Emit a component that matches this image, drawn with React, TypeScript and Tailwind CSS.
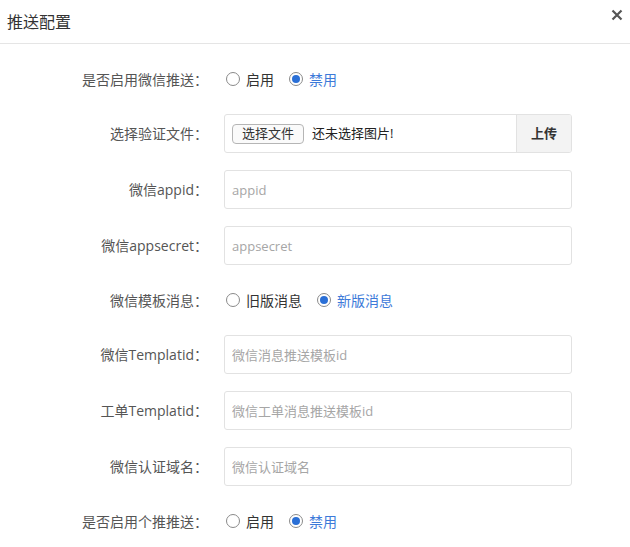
import React from "react";

const font = { fontFamily: '"Open Sans", "Noto Sans CJK SC", sans-serif' };

type RadioProps = { label: string; checked?: boolean; name: string };

const Radio = ({ label, checked, name }: RadioProps) => (
  <label className="flex items-center gap-[6px] cursor-pointer">
    <input type="radio" name={name} defaultChecked={checked} className="sr-only" />
    <span className="flex h-[14px] w-[14px] items-center justify-center rounded-full border border-[#8a8a8a] bg-white">
      {checked && <span className="h-[8px] w-[8px] rounded-full bg-[#2a6fd6]"></span>}
    </span>
    <span className={checked ? "text-[#3d7ad9]" : "text-[#333]"}>{label}</span>
  </label>
);

const Label = ({ children }: { children: React.ReactNode }) => (
  <div className="w-[208px] shrink-0 text-right text-[14px] text-[#555]">{children}</div>
);

const TextRow = ({ label, placeholder }: { label: string; placeholder: string }) => (
  <div className="mb-[17px] flex h-[39px] items-center">
    <Label>{label}</Label>
    <input
      placeholder={placeholder}
      className="ml-[16px] h-[39px] w-[348px] rounded-[3px] border border-[#e2e2e2] px-[7px] text-[13px] text-[#333] outline-none placeholder:text-[#a6a6a6]"
    />
  </div>
);

const RadioRow = ({ label, options, name, last }: { label: string; options: [string, boolean][]; name: string; last?: boolean }) => (
  <div className={`flex h-[36px] items-center ${last ? "" : "mb-[17px]"}`}>
    <Label>{label}</Label>
    <div className="ml-[18px] flex items-center gap-[15px] text-[14px]">
      {options.map(([o, c]) => (
        <Radio key={o} label={o} checked={c} name={name} />
      ))}
    </div>
  </div>
);

const App = () => {
  return (
    <div className="h-[547px] w-[630px] overflow-hidden bg-white" style={font}>
      <div className="flex h-[44px] items-center justify-between border-b border-[#e5e5e5] pl-[7px] pr-[7px]">
        <span className="text-[16px] text-[#333]">推送配置</span>
        <button className="mb-[14px] text-[#555]">
          <svg width="12" height="12" viewBox="0 0 12 12">
            <path d="M1.5 1.5 L10.5 10.5 M10.5 1.5 L1.5 10.5" stroke="#555" strokeWidth="2.2" />
          </svg>
        </button>
      </div>
      <div className="pt-[17px]">
        <RadioRow label="是否启用微信推送：" name="wx" options={[["启用", false], ["禁用", true]]} />
        <div className="mb-[17px] flex h-[39px] items-center">
          <Label>选择验证文件：</Label>
          <div className="ml-[16px] flex h-[39px] w-[348px] overflow-hidden rounded-[3px] border border-[#e2e2e2]">
            <div className="flex flex-1 items-center pl-[7px] text-[13px] text-[#222]">
              <span className="flex h-[20px] items-center rounded-[4px] border border-[#b5b5b5] bg-[#fafafa] px-[9px] text-[#333]">
                选择文件
              </span>
              <span className="ml-[8px]">还未选择图片!</span>
            </div>
            <button className="w-[55px] border-l border-[#e2e2e2] bg-[#f3f3f3] text-[13px] font-semibold text-[#333]">上传</button>
          </div>
        </div>
        <TextRow label="微信appid：" placeholder="appid" />
        <TextRow label="微信appsecret：" placeholder="appsecret" />
        <RadioRow label="微信模板消息：" name="tpl" options={[["旧版消息", false], ["新版消息", true]]} />
        <TextRow label="微信Templatid：" placeholder="微信消息推送模板id" />
        <TextRow label="工单Templatid：" placeholder="微信工单消息推送模板id" />
        <TextRow label="微信认证域名：" placeholder="微信认证域名" />
        <RadioRow label="是否启用个推推送：" name="gt" options={[["启用", false], ["禁用", true]]} last />
      </div>
    </div>
  );
};

export default App;
